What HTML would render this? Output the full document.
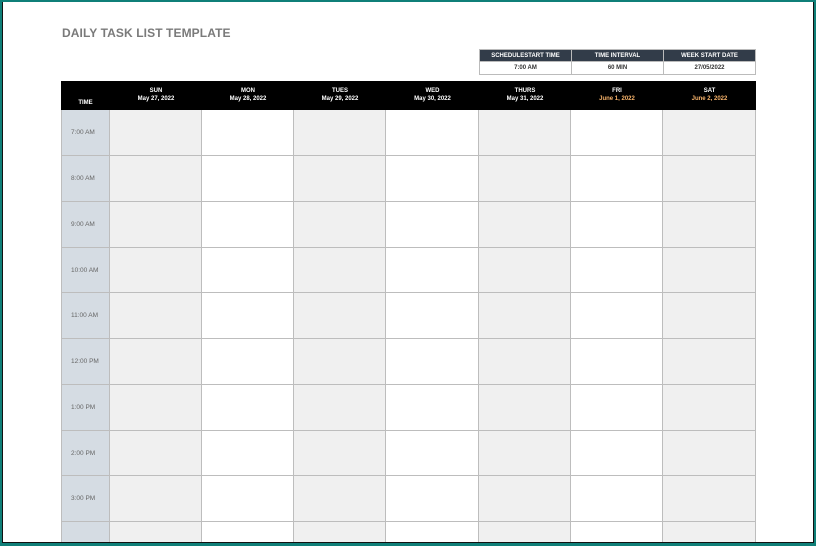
<!DOCTYPE html>
<html><head><meta charset="utf-8"><style>
*{margin:0;padding:0;box-sizing:border-box}
body{width:816px;height:546px;background:#0f7f78;position:relative;overflow:hidden;font-family:"Liberation Sans",sans-serif}
.frame{position:absolute;left:2px;top:2px;width:812px;height:541px;background:#fff;border:1px solid #111;border-top:none;overflow:hidden}
.title{position:absolute;left:59px;top:24px;font-size:12px;font-weight:bold;color:#7a7a7a;letter-spacing:0.1px}
.abs{position:absolute}
.th{background:#323c49;color:#fff;font-size:6px;font-weight:bold;text-align:center;line-height:12px;border:1px solid #bbb}
.tv{background:#fff;color:#333;font-size:6px;font-weight:bold;text-align:center;line-height:12px;border:1px solid #bbb}
.hdr{position:absolute;left:58px;top:79px;width:695px;height:29px;background:#000}
.hd{position:absolute;top:6px;color:#fff;font-size:6px;font-weight:bold;text-align:center;line-height:8px}
.hd .o{color:#f7b36b}
.cell{position:absolute;border-right:1px solid #bdbdbd;border-bottom:1px solid #bdbdbd}
.tm{background:#d5dce3;color:#666;font-size:6.5px;padding-left:9px;display:flex;align-items:center}
</style></head><body>
<div class="frame">
<div class="title">DAILY TASK LIST TEMPLATE</div>
<div class="abs th" style="left:476px;top:47px;width:93px;height:13px">SCHEDULESTART TIME</div>
<div class="abs th" style="left:568px;top:47px;width:93px;height:13px">TIME INTERVAL</div>
<div class="abs th" style="left:660px;top:47px;width:93px;height:13px">WEEK START DATE</div>
<div class="abs tv" style="left:476px;top:59px;width:93px;height:14px">7:00 AM</div>
<div class="abs tv" style="left:568px;top:59px;width:93px;height:14px">60 MIN</div>
<div class="abs tv" style="left:660px;top:59px;width:93px;height:14px">27/05/2022</div>
<div class="hdr">
<div class="hd" style="left:0;width:49px;top:18px">TIME</div>
<div class="hd" style="left:49px;width:92px">SUN<br>May 27, 2022</div>
<div class="hd" style="left:141px;width:92px">MON<br>May 28, 2022</div>
<div class="hd" style="left:233px;width:92px">TUES<br>May 29, 2022</div>
<div class="hd" style="left:325px;width:93px">WED<br>May 30, 2022</div>
<div class="hd" style="left:418px;width:92px">THURS<br>May 31, 2022</div>
<div class="hd" style="left:510px;width:92px">FRI<br><span class="o">June 1, 2022</span></div>
<div class="hd" style="left:602px;width:93px">SAT<br><span class="o">June 2, 2022</span></div>
</div>
<div id="g"></div>
</div>
<script>
var g=document.getElementById('g'),h='';
var xs=[58,107,199,291,383,476,568,660,753];
var ys=[108,154,200,246,291,337,383,429,474,520,566];
var t=['7:00 AM','8:00 AM','9:00 AM','10:00 AM','11:00 AM','12:00 PM','1:00 PM','2:00 PM','3:00 PM',''];
for(var r=0;r<10;r++){for(var c=0;c<8;c++){
var bg=c==0?'':(c%2==1?'background:#f0f0f0;':'background:#fff;');
var bl=c==0?'border-left:1px solid #bdbdbd;':'';
h+='<div class="cell'+(c==0?' tm':'')+'" style="'+bg+bl+'left:'+xs[c]+'px;top:'+ys[r]+'px;width:'+(xs[c+1]-xs[c])+'px;height:'+(ys[r+1]-ys[r])+'px">'+(c==0?t[r]:'')+'</div>';
}}
g.innerHTML=h;
</script>
</body></html>
